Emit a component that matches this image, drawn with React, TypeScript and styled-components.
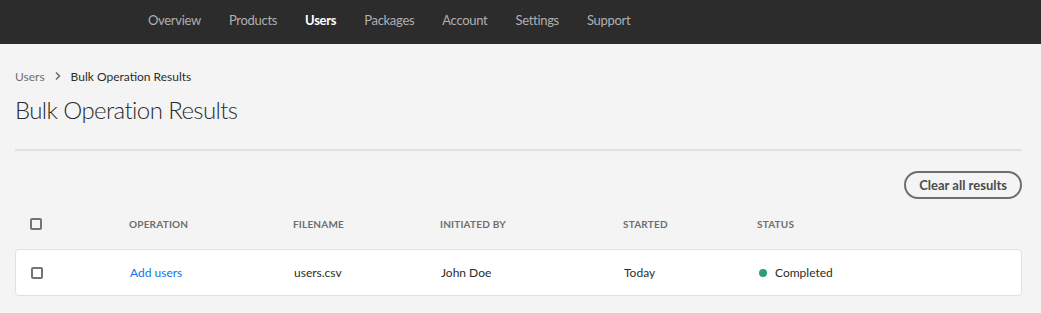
import React from "react";
import styled, { createGlobalStyle } from "styled-components";

const GlobalStyle = createGlobalStyle`
  body {
    margin: 0;
    background: #f4f4f4;
    font-family: "Lato", "Liberation Sans", sans-serif;
    color: #2c2c2c;
  }
`;

const COLUMNS = "99px 164px 147px 183px 134px 1fr";

const TopBar = styled.header`
  height: 44px;
  background: #2c2c2c;
  display: flex;
  align-items: center;
  padding-left: 148px;
  gap: 28px;
`;

const NavItem = styled.span<{ $active?: boolean }>`
  font-size: 13px;
  letter-spacing: -0.3px;
  color: ${(p) => (p.$active ? "#ffffff" : "#b0b0b0")};
  font-weight: ${(p) => (p.$active ? 700 : 400)};
  margin-top: -5px;
`;

const Content = styled.main`
  padding: 0 19px 0 15px;
`;

const Breadcrumbs = styled.div`
  display: flex;
  align-items: center;
  gap: 10px;
  margin-top: 24px;
  font-size: 12px;
  height: 16px;
`;

const Crumb = styled.span<{ $current?: boolean }>`
  color: ${(p) => (p.$current ? "#2c2c2c" : "#6e6e6e")};
`;

const Title = styled.h1`
  margin: 10px 0 0;
  font-size: 24px;
  letter-spacing: -0.6px;
  font-weight: 300;
  line-height: 32px;
  color: #2c2c2c;
`;

const Divider = styled.hr`
  margin: 23px 0 0;
  border: none;
  height: 2px;
  background: #e1e1e1;
`;

const Actions = styled.div`
  display: flex;
  justify-content: flex-end;
  margin-top: 20px;
`;

const OutlineButton = styled.button`
  height: 28px;
  padding: 0 13px;
  border: 2px solid #6e6e6e;
  border-radius: 14px;
  background: transparent;
  font-family: inherit;
  font-size: 13px;
  font-weight: 700;
  color: #4b4b4b;
`;

const HeaderRow = styled.div`
  display: grid;
  grid-template-columns: ${COLUMNS};
  align-items: center;
  padding-left: 15px;
  height: 50px;
`;

const HeadCell = styled.span`
  font-size: 10px;
  font-weight: 700;
  letter-spacing: 0.2px;
  text-transform: uppercase;
  color: #6e6e6e;
`;

const Card = styled.div`
  display: grid;
  grid-template-columns: ${COLUMNS};
  align-items: center;
  height: 45px;
  padding-left: 15px;
  background: #ffffff;
  border: 1px solid #e1e1e1;
  border-radius: 4px;
`;

const Cell = styled.span`
  font-size: 12px;
  color: #2c2c2c;
`;

const Link = styled.a`
  font-size: 12px;
  color: #1473e6;
  text-decoration: none;
`;

const Checkbox = styled.span`
  width: 12px;
  height: 12px;
  box-sizing: border-box;
  border: 2px solid #747474;
  border-radius: 2px;
`;

const Status = styled.span`
  display: flex;
  align-items: center;
  gap: 8px;
  margin-left: 1px;
  font-size: 12px;
  color: #2c2c2c;
`;

const Dot = styled.span`
  width: 8px;
  height: 8px;
  border-radius: 50%;
  background: #2d9d78;
`;

const Chevron = () => (
  <svg width="6" height="10" viewBox="0 0 6 10">
    <path d="M1 1.5 L4.5 5 L1 8.5" fill="none" stroke="#6e6e6e" strokeWidth="1.6" />
  </svg>
);

const navItems = ["Overview", "Products", "Users", "Packages", "Account", "Settings", "Support"];

export default function App() {
  return (
    <>
      <GlobalStyle />
      <TopBar>
        {navItems.map((item) => (
          <NavItem key={item} $active={item === "Users"}>
            {item}
          </NavItem>
        ))}
      </TopBar>
      <Content>
        <Breadcrumbs>
          <Crumb>Users</Crumb>
          <Chevron />
          <Crumb $current>Bulk Operation Results</Crumb>
        </Breadcrumbs>
        <Title>Bulk Operation Results</Title>
        <Divider />
        <Actions>
          <OutlineButton>Clear all results</OutlineButton>
        </Actions>
        <HeaderRow>
          <Checkbox />
          <HeadCell>Operation</HeadCell>
          <HeadCell>Filename</HeadCell>
          <HeadCell>Initiated by</HeadCell>
          <HeadCell>Started</HeadCell>
          <HeadCell>Status</HeadCell>
        </HeaderRow>
        <Card>
          <Checkbox />
          <Link href="#">Add users</Link>
          <Cell>users.csv</Cell>
          <Cell>John Doe</Cell>
          <Cell>Today</Cell>
          <Status>
            <Dot />
            Completed
          </Status>
        </Card>
      </Content>
    </>
  );
}
